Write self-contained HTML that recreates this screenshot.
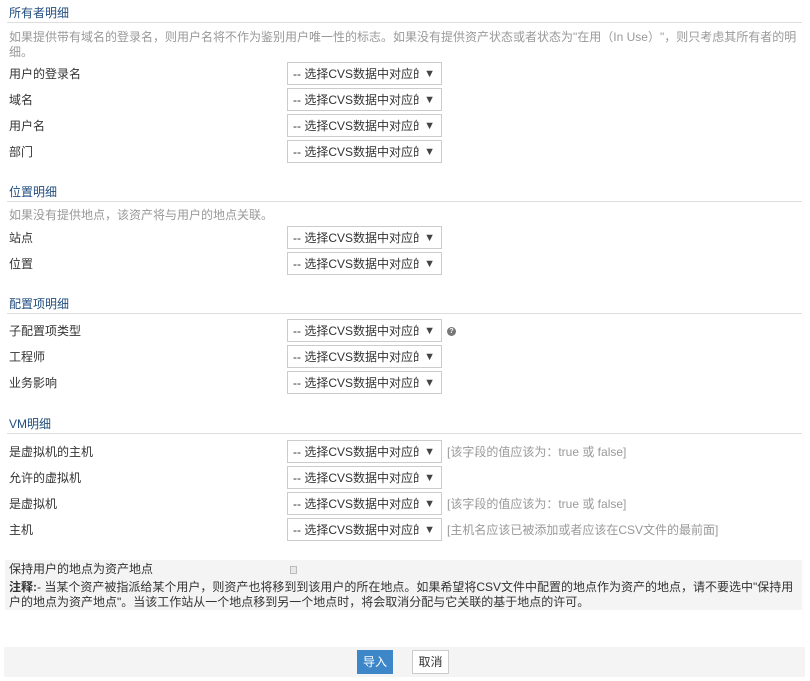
<!DOCTYPE html><html><head><meta charset="utf-8"><style>
body{margin:0;width:810px;height:681px;background:#fff;font-family:"Liberation Sans","Noto Sans CJK SC",sans-serif;font-size:12px;color:#333;position:relative;overflow:hidden}
.a{position:absolute;white-space:nowrap;line-height:14px}
.h{color:#1f4c7e;font-size:12px}
.ln{position:absolute;left:7px;width:795px;height:1px;background:#ddd}
.d{color:#999}
.s{position:absolute;left:287px;width:153px;height:21px;border:1px solid #ccc;background:#fff;box-sizing:content-box;overflow:hidden}
.s span{position:absolute;left:5px;top:4px;width:126px;overflow:hidden;font-size:12px;color:#333;line-height:14px;white-space:nowrap}
.s i{position:absolute;right:6px;top:5px;font-style:normal;font-size:11px;line-height:12px;color:#444}
.n{color:#999}
</style></head><body>
<div class="a h" style="left:9px;top:6px">所有者明细</div><div class="ln" style="top:22px"></div>
<div class="a d" style="left:9px;top:30px;line-height:15px;white-space:normal;width:795px">如果提供带有域名的登录名，则用户名将不作为鉴别用户唯一性的标志。如果没有提供资产状态或者状态为"在用（In Use）"，则只考虑其所有者的明细。</div>
<div class="a" style="left:9px;top:67px">用户的登录名</div><div class="s" style="top:62px"><span>-- 选择CVS数据中对应的</span><i>▼</i></div>
<div class="a" style="left:9px;top:93px">域名</div><div class="s" style="top:88px"><span>-- 选择CVS数据中对应的</span><i>▼</i></div>
<div class="a" style="left:9px;top:119px">用户名</div><div class="s" style="top:114px"><span>-- 选择CVS数据中对应的</span><i>▼</i></div>
<div class="a" style="left:9px;top:145px">部门</div><div class="s" style="top:140px"><span>-- 选择CVS数据中对应的</span><i>▼</i></div>

<div class="a h" style="left:9px;top:185px">位置明细</div><div class="ln" style="top:201px"></div>
<div class="a d" style="left:9px;top:208px">如果没有提供地点，该资产将与用户的地点关联。</div>
<div class="a" style="left:9px;top:231px">站点</div><div class="s" style="top:226px"><span>-- 选择CVS数据中对应的</span><i>▼</i></div>
<div class="a" style="left:9px;top:257px">位置</div><div class="s" style="top:252px"><span>-- 选择CVS数据中对应的</span><i>▼</i></div>

<div class="a h" style="left:9px;top:297px">配置项明细</div><div class="ln" style="top:313px"></div>
<div class="a" style="left:9px;top:324px">子配置项类型</div><div class="s" style="top:319px"><span>-- 选择CVS数据中对应的</span><i>▼</i></div>
<div class="a" style="left:447px;top:327px;width:9px;height:9px;border-radius:50%;background:#777;color:#fff;font-size:7px;line-height:9px;text-align:center;font-weight:bold">?</div>
<div class="a" style="left:9px;top:350px">工程师</div><div class="s" style="top:345px"><span>-- 选择CVS数据中对应的</span><i>▼</i></div>
<div class="a" style="left:9px;top:376px">业务影响</div><div class="s" style="top:371px"><span>-- 选择CVS数据中对应的</span><i>▼</i></div>

<div class="a h" style="left:9px;top:417px">VM明细</div><div class="ln" style="top:433px"></div>
<div class="a" style="left:9px;top:445px">是虚拟机的主机</div><div class="s" style="top:440px"><span>-- 选择CVS数据中对应的</span><i>▼</i></div><div class="a n" style="left:447px;top:445px">[该字段的值应该为：true 或 false]</div>
<div class="a" style="left:9px;top:471px">允许的虚拟机</div><div class="s" style="top:466px"><span>-- 选择CVS数据中对应的</span><i>▼</i></div>
<div class="a" style="left:9px;top:497px">是虚拟机</div><div class="s" style="top:492px"><span>-- 选择CVS数据中对应的</span><i>▼</i></div><div class="a n" style="left:447px;top:497px">[该字段的值应该为：true 或 false]</div>
<div class="a" style="left:9px;top:523px">主机</div><div class="s" style="top:518px"><span>-- 选择CVS数据中对应的</span><i>▼</i></div><div class="a n" style="left:447px;top:523px">[主机名应该已被添加或者应该在CSV文件的最前面]</div>

<div style="position:absolute;left:5px;top:560px;width:797px;height:50px;background:#f4f4f4"></div>
<div class="a" style="left:9px;top:562px">保持用户的地点为资产地点</div>
<div class="a" style="left:290px;top:566px;width:5px;height:6px;border:1px solid #bbb;background:#e8e8e8"></div>
<div class="a" style="left:9px;top:580px;width:795px;white-space:normal;line-height:15px"><b>注释:</b>- 当某个资产被指派给某个用户，则资产也将移到到该用户的所在地点。如果希望将CSV文件中配置的地点作为资产的地点，请不要选中"保持用户的地点为资产地点"。当该工作站从一个地点移到另一个地点时，将会取消分配与它关联的基于地点的许可。</div>

<div style="position:absolute;left:4px;top:647px;width:801px;height:30px;background:#f4f4f4"></div>
<div class="a" style="left:357px;top:650px;width:36px;height:24px;background:#3d87c9;color:#fff;text-align:center;line-height:24px">导入</div>
<div class="a" style="left:412px;top:650px;width:35px;height:22px;background:#fff;border:1px solid #ccc;text-align:center;line-height:22px">取消</div>
</body></html>
